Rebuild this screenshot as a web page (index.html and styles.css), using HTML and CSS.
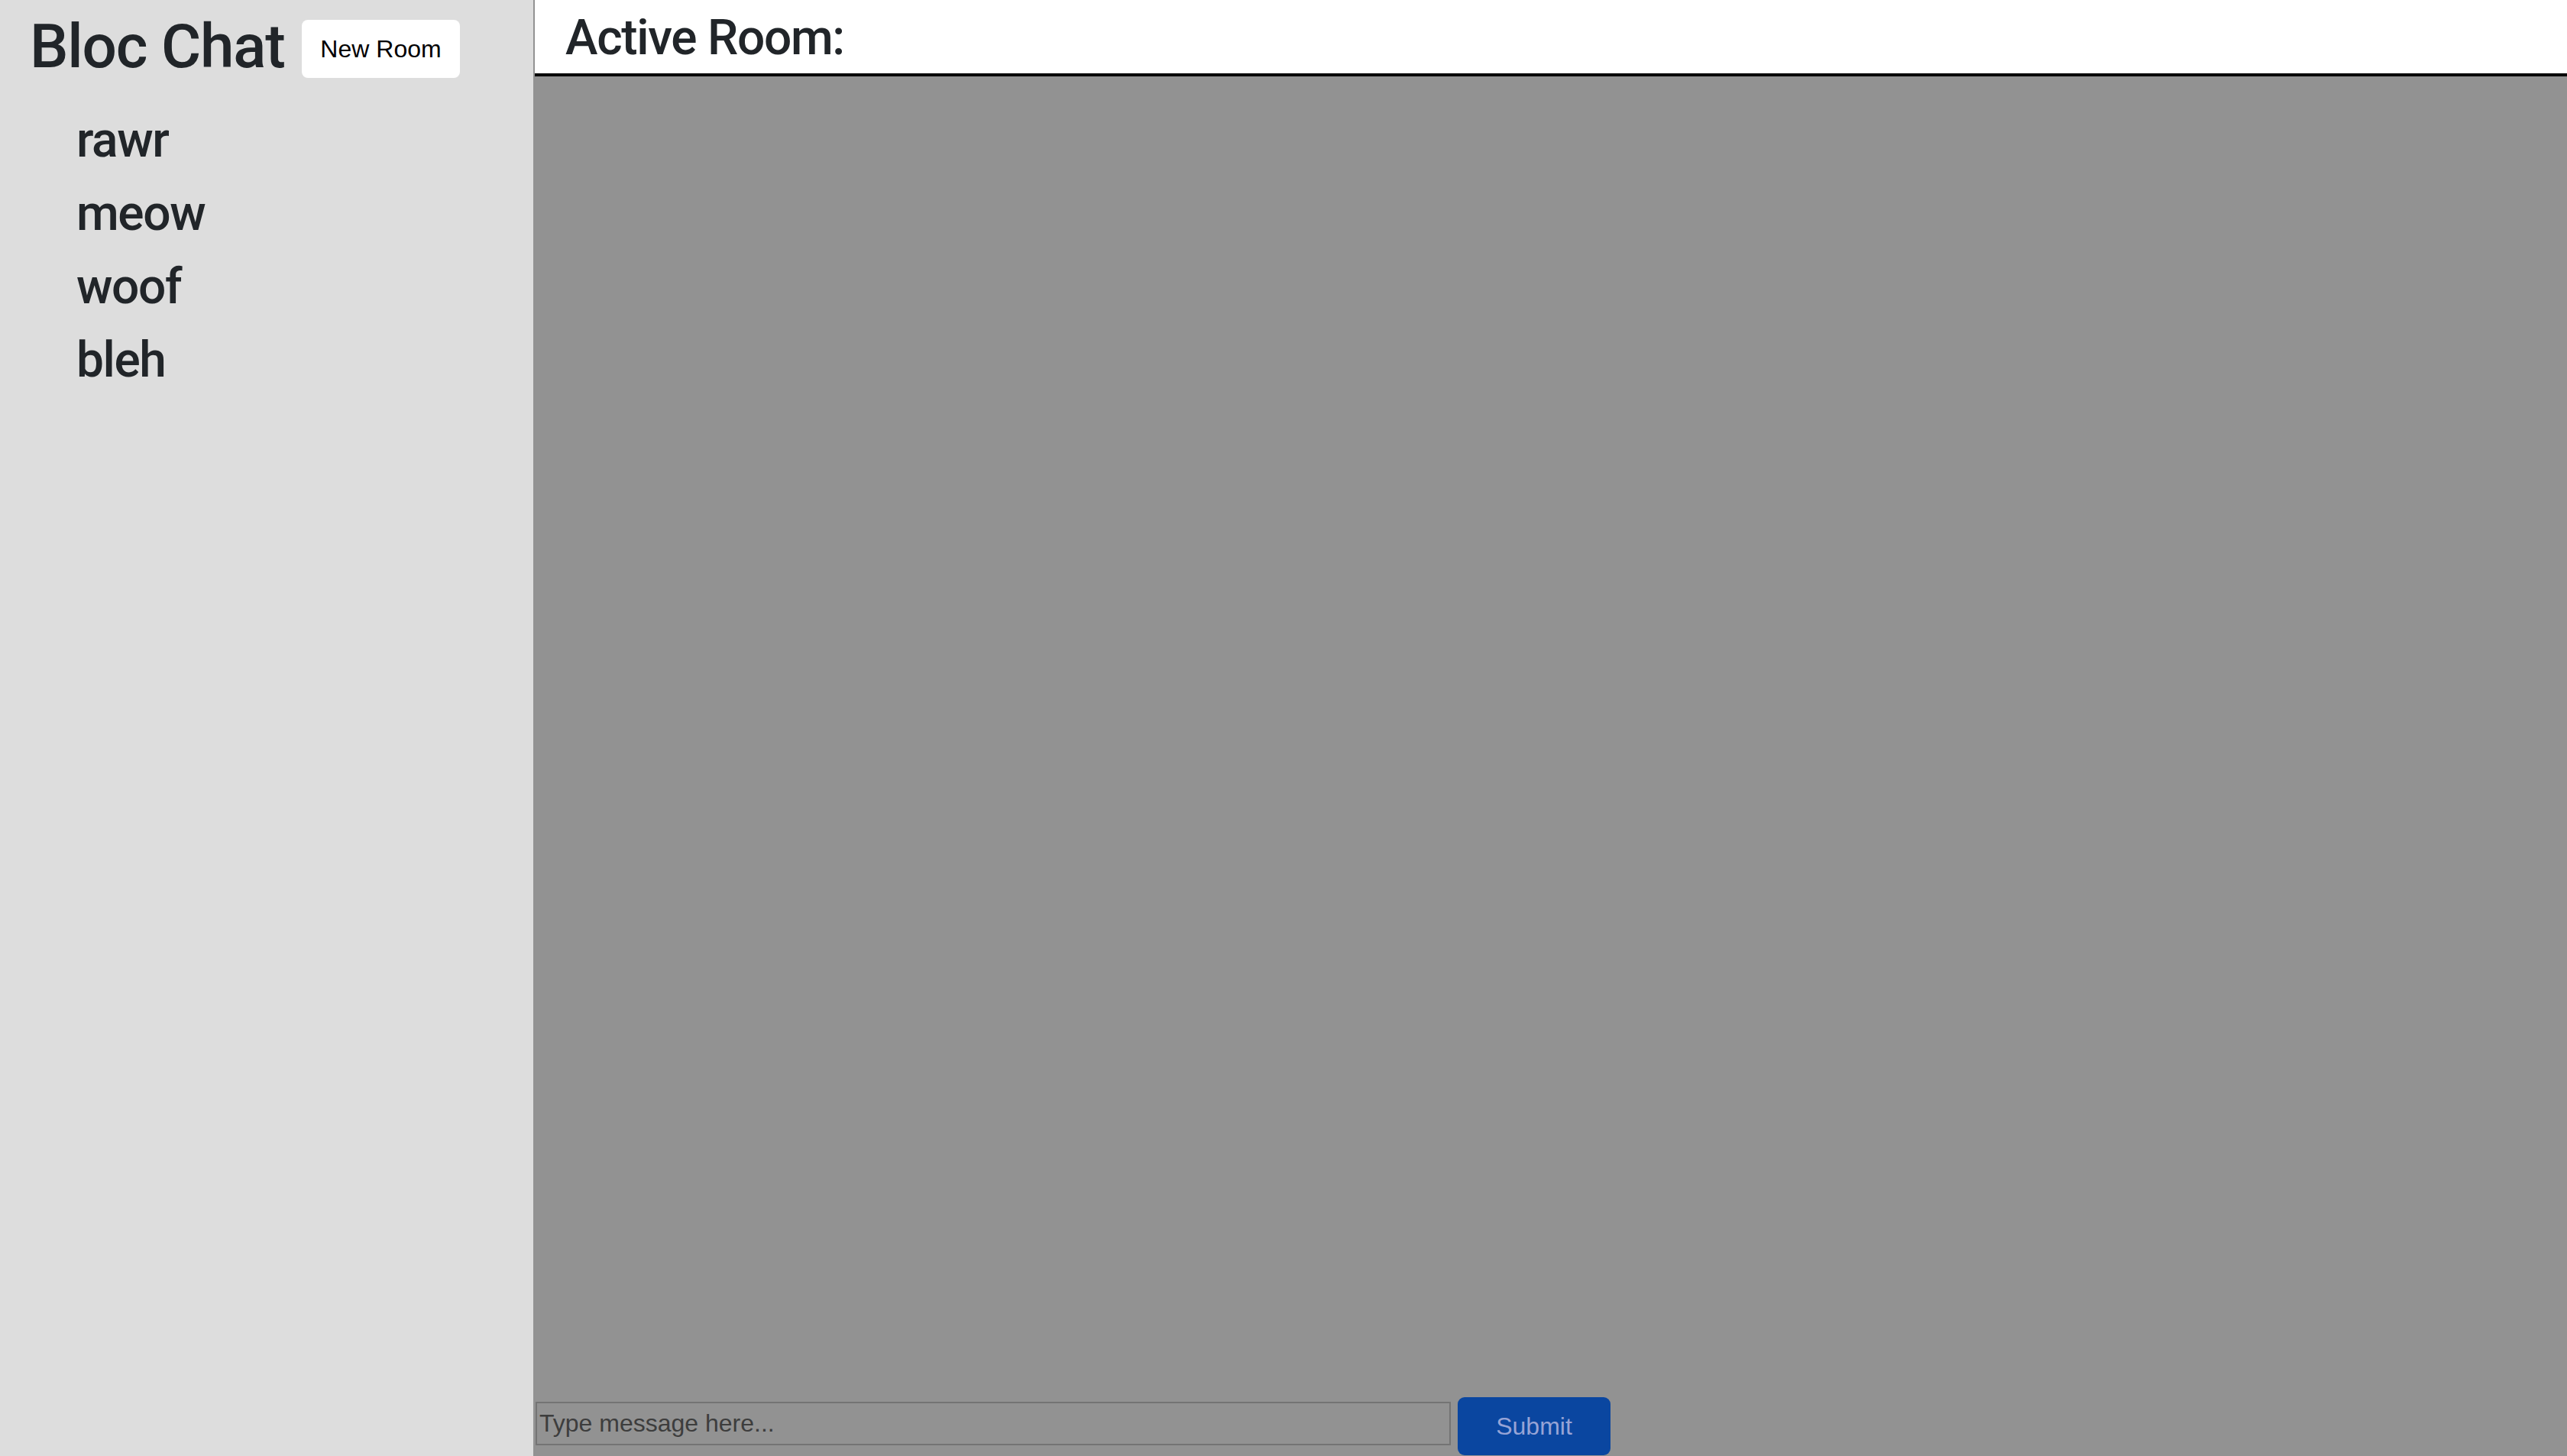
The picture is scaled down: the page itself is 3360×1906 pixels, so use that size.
FILE: index.html
```html
<!DOCTYPE html>
<html lang="en">
<head>
<meta charset="utf-8">
<title>Bloc Chat</title>
<link rel="stylesheet" href="styles.css">
</head>
<body>
<div class="app">
  <aside class="sidebar">
    <div class="sidebar-header">
      <h1 class="brand">Bloc Chat</h1>
      <button class="new-room" type="button">New Room</button>
    </div>
    <ul class="rooms">
      <li class="room">rawr</li>
      <li class="room">meow</li>
      <li class="room">woof</li>
      <li class="room">bleh</li>
    </ul>
  </aside>
  <main class="main">
    <header class="main-header">
      <h2 class="active-room">Active Room:</h2>
    </header>
    <section class="messages">
      <form class="composer">
        <input class="message-input" type="text" placeholder="Type message here...">
        <button class="submit" type="button">Submit</button>
      </form>
    </section>
  </main>
</div>
</body>
</html>
```
FILE: styles.css
```css
html, body {
  margin: 0;
  padding: 0;
  height: 1906px;
  overflow: hidden;
}

body {
  font-family: "Liberation Sans", Arial, Helvetica, sans-serif;
  color: #212529;
  background: #929292;
}

.app {
  display: flex;
  height: 1906px;
}

.sidebar {
  width: 698px;
  flex: 0 0 698px;
  background: #dddddd;
  border-right: 2px solid #929292;
}

.sidebar-header {
  display: flex;
  align-items: flex-start;
  width: 563px;
  height: 108px;
  padding-left: 39px;
}

.brand {
  margin: 13px 0 0 0;
  font-family: Roboto, "Liberation Sans", Arial, sans-serif;
  font-size: 80px;
  line-height: 96px;
  font-weight: 500;
  letter-spacing: -1.2px;
  color: #212529;
}

.new-room {
  margin: 26px 0 0 auto;
  width: 207px;
  height: 76px;
  padding: 0;
  border: none;
  border-radius: 8px;
  background: #ffffff;
  color: #000000;
  font-family: "Liberation Sans", Arial, Helvetica, sans-serif;
  font-size: 32px;
  line-height: 76px;
}

.rooms {
  list-style: none;
  margin: 28px 0 0 0;
  padding: 0 0 0 100px;
}

.room {
  font-family: Roboto, "Liberation Sans", Arial, sans-serif;
  font-size: 64px;
  line-height: 96px;
  font-weight: 500;
  letter-spacing: -1.4px;
  color: #212529;
}

.main {
  flex: 1;
  display: flex;
  flex-direction: column;
  min-width: 0;
}

.main-header {
  height: 96px;
  background: #ffffff;
  border-bottom: 4px solid #000000;
  padding-left: 40px;
}

.active-room {
  margin: 0;
  padding-top: 3px;
  font-family: Roboto, "Liberation Sans", Arial, sans-serif;
  font-size: 64px;
  line-height: 93px;
  font-weight: 500;
  letter-spacing: -1.3px;
  color: #212529;
}

.messages {
  flex: 1;
  background: #929292;
  display: flex;
  flex-direction: column;
  justify-content: flex-end;
}

.composer {
  display: flex;
  align-items: flex-end;
  margin: 0;
  padding-left: 1px;
}

.message-input {
  box-sizing: border-box;
  width: 1198px;
  height: 57px;
  margin: 0 0 14px 0;
  padding: 0 3px;
  border: 2px solid #747474;
  background: transparent;
  font-family: "Liberation Sans", Arial, Helvetica, sans-serif;
  font-size: 32px;
  color: #3c3c3c;
  outline: none;
}

.message-input::placeholder {
  color: #3d3d3d;
  opacity: 1;
}

.submit {
  width: 200px;
  height: 76px;
  margin: 0 0 1px 9px;
  padding: 0;
  border: none;
  border-radius: 9px;
  background: #0a46a0;
  color: #97a4d6;
  font-family: "Liberation Sans", Arial, Helvetica, sans-serif;
  font-size: 32px;
  line-height: 76px;
}
```
